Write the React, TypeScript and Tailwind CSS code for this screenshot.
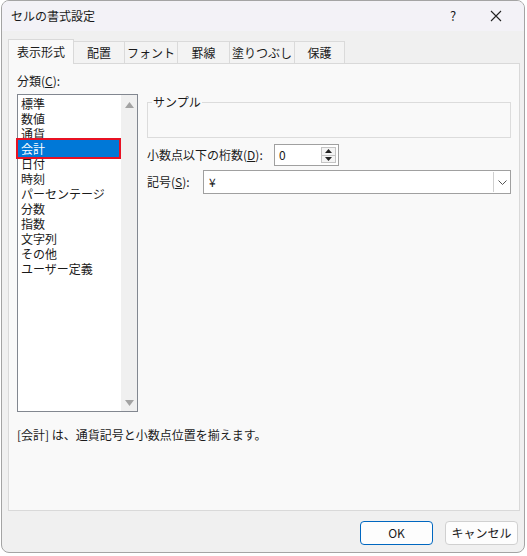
import { useState } from 'react'

const categories = [
  '標準',
  '数値',
  '通貨',
  '会計',
  '日付',
  '時刻',
  'パーセンテージ',
  '分数',
  '指数',
  '文字列',
  'その他',
  'ユーザー定義',
]

const tabs = ['表示形式', '配置', 'フォント', '罫線', '塗りつぶし', '保護']
const tabWidths = ['w-[66px]', 'w-[52px]', 'w-[54px]', 'w-[53px]', 'w-[66px]', 'w-[51px]']

function Arrow({ down }: { down?: boolean }) {
  return (
    <svg width="9" height="6" viewBox="0 0 9 6">
      <path d={down ? 'M0 0h9L4.5 6z' : 'M0 6h9L4.5 0z'} fill="#a3a3a3" />
    </svg>
  )
}

export default function App() {
  const [selected, setSelected] = useState('会計')
  const [decimals, setDecimals] = useState(0)

  return (
    <div
      className="h-[556px] w-[527px] bg-white text-[12px] leading-[16px] text-[#1a1a1a]"
      style={{ fontFamily: '"Noto Sans CJK JP", "Noto Sans", sans-serif' }}
    >
      <div className="ml-px flex h-[553px] w-[524px] flex-col overflow-hidden rounded-[8px] border border-[#a4a4a4] bg-[#f0f0f0]">
        {/* title bar */}
        <div className="flex h-[30px] items-center bg-[#f3f2f7] pl-[9px]">
          <span className="flex-1">セルの書式設定</span>
          <span className="w-[30px] text-center text-[13px]">?</span>
          <span className="flex w-[56px] justify-center">
            <svg width="12" height="12" viewBox="0 0 12 12">
              <path d="M1 1l10 10M11 1L1 11" stroke="#222" strokeWidth="1.1" />
            </svg>
          </span>
        </div>

        {/* tabs */}
        <div className="ml-[6px] mt-[7px] flex h-[25px] items-end">
          {tabs.map((t, i) =>
            i === 0 ? (
              <div
                key={t}
                className={`relative z-10 -mb-px flex h-[25px] items-center justify-center border border-b-0 border-[#d9d9d9] bg-[#f9f9f9] ${tabWidths[i]}`}
              >
                {t}
              </div>
            ) : (
              <div
                key={t}
                className={`-ml-px flex h-[22px] items-center justify-center border border-b-0 border-[#dadada] bg-[#f3f3f3] ${tabWidths[i]}`}
              >
                {t}
              </div>
            ),
          )}
        </div>

        {/* panel */}
        <div className="ml-[6px] flex h-[448px] w-[512px] flex-col border border-[#d9d9d9] bg-[#f9f9f9] px-[8px] pt-[9px]">
          <div className="flex">
            {/* category list */}
            <div className="flex w-[121px] flex-col">
              <div>
                分類(<span className="underline">C</span>):
              </div>
              <div className="mt-[5px] flex h-[318px] border border-[#828790] bg-white">
                <div className="flex-1 pt-px">
                  {categories.map((c) =>
                    c === selected ? (
                      <div
                        key={c}
                        className="relative z-10 -my-px h-[17px] bg-[#0078d7] pl-[3px] leading-[17px] text-white outline-2 outline-[#e81123]"
                      >
                        {c}
                      </div>
                    ) : (
                      <div
                        key={c}
                        className="h-[15px] cursor-default pl-[3px] leading-[15px]"
                        onClick={() => setSelected(c)}
                      >
                        {c}
                      </div>
                    ),
                  )}
                </div>
                <div className="ml-[2px] flex w-[16px] flex-col items-center justify-between bg-[#f0f0f0] pb-[5px] pt-[7px]">
                  <Arrow />
                  <Arrow down />
                </div>
              </div>
            </div>

            {/* right side */}
            <div className="ml-[9px] flex flex-1 flex-col">
              <div className="relative mt-[29px] h-[36px] border border-[#dcdcdc]">
                <span className="absolute -top-[9px] left-[4px] bg-[#f9f9f9] px-px leading-[16px]">サンプル</span>
              </div>

              <div className="mt-[6px] flex h-[22px] items-center">
                <span className="w-[127px]">
                  小数点以下の桁数(<span className="underline">D</span>):
                </span>
                <div className="flex h-[22px] w-[65px] border border-[#a0a0a0] bg-white">
                  <span className="flex-1 pl-[4px] leading-[20px]">{decimals}</span>
                  <div className="my-[2px] mr-[2px] flex w-[15px] flex-col border border-[#c4c4c4] bg-[#f4f4f4]">
                    <button
                      className="flex flex-1 items-center justify-center"
                      onClick={() => setDecimals(Math.min(30, decimals + 1))}
                    >
                      <svg width="7" height="4" viewBox="0 0 7 4">
                        <path d="M0 4h7L3.5 0z" fill="#222" />
                      </svg>
                    </button>
                    <button
                      className="flex flex-1 items-center justify-center border-t border-[#c4c4c4]"
                      onClick={() => setDecimals(Math.max(0, decimals - 1))}
                    >
                      <svg width="7" height="4" viewBox="0 0 7 4">
                        <path d="M0 0h7L3.5 4z" fill="#222" />
                      </svg>
                    </button>
                  </div>
                </div>
              </div>

              <div className="mt-[4px] flex h-[24px] items-center">
                <span className="w-[56px]">
                  記号(<span className="underline">S</span>):
                </span>
                <div className="flex h-[24px] flex-1 border border-[#a0a0a0] bg-white">
                  <span className="flex-1 pl-[5px] leading-[22px]">¥</span>
                  <div className="my-px flex w-[17px] items-center justify-center border-l border-[#d0d0d0]">
                    <svg width="9" height="5" viewBox="0 0 9 5">
                      <path d="M0.5 0.5l4 4 4-4" fill="none" stroke="#555" strokeWidth="1" />
                    </svg>
                  </div>
                </div>
              </div>
            </div>
          </div>

          <div className="mt-[15px]">[会計] は、通貨記号と小数点位置を揃えます。</div>
        </div>

        {/* buttons */}
        <div className="mt-[10px] flex justify-end gap-[12px] pr-[6px]">
          <button className="h-[24px] w-[73px] rounded-[4px] border border-[#0067c0] bg-[#fdfdfd]">OK</button>
          <button className="h-[24px] w-[73px] rounded-[4px] border border-[#d0d0d0] bg-[#fdfdfd]">キャンセル</button>
        </div>
      </div>
    </div>
  )
}
